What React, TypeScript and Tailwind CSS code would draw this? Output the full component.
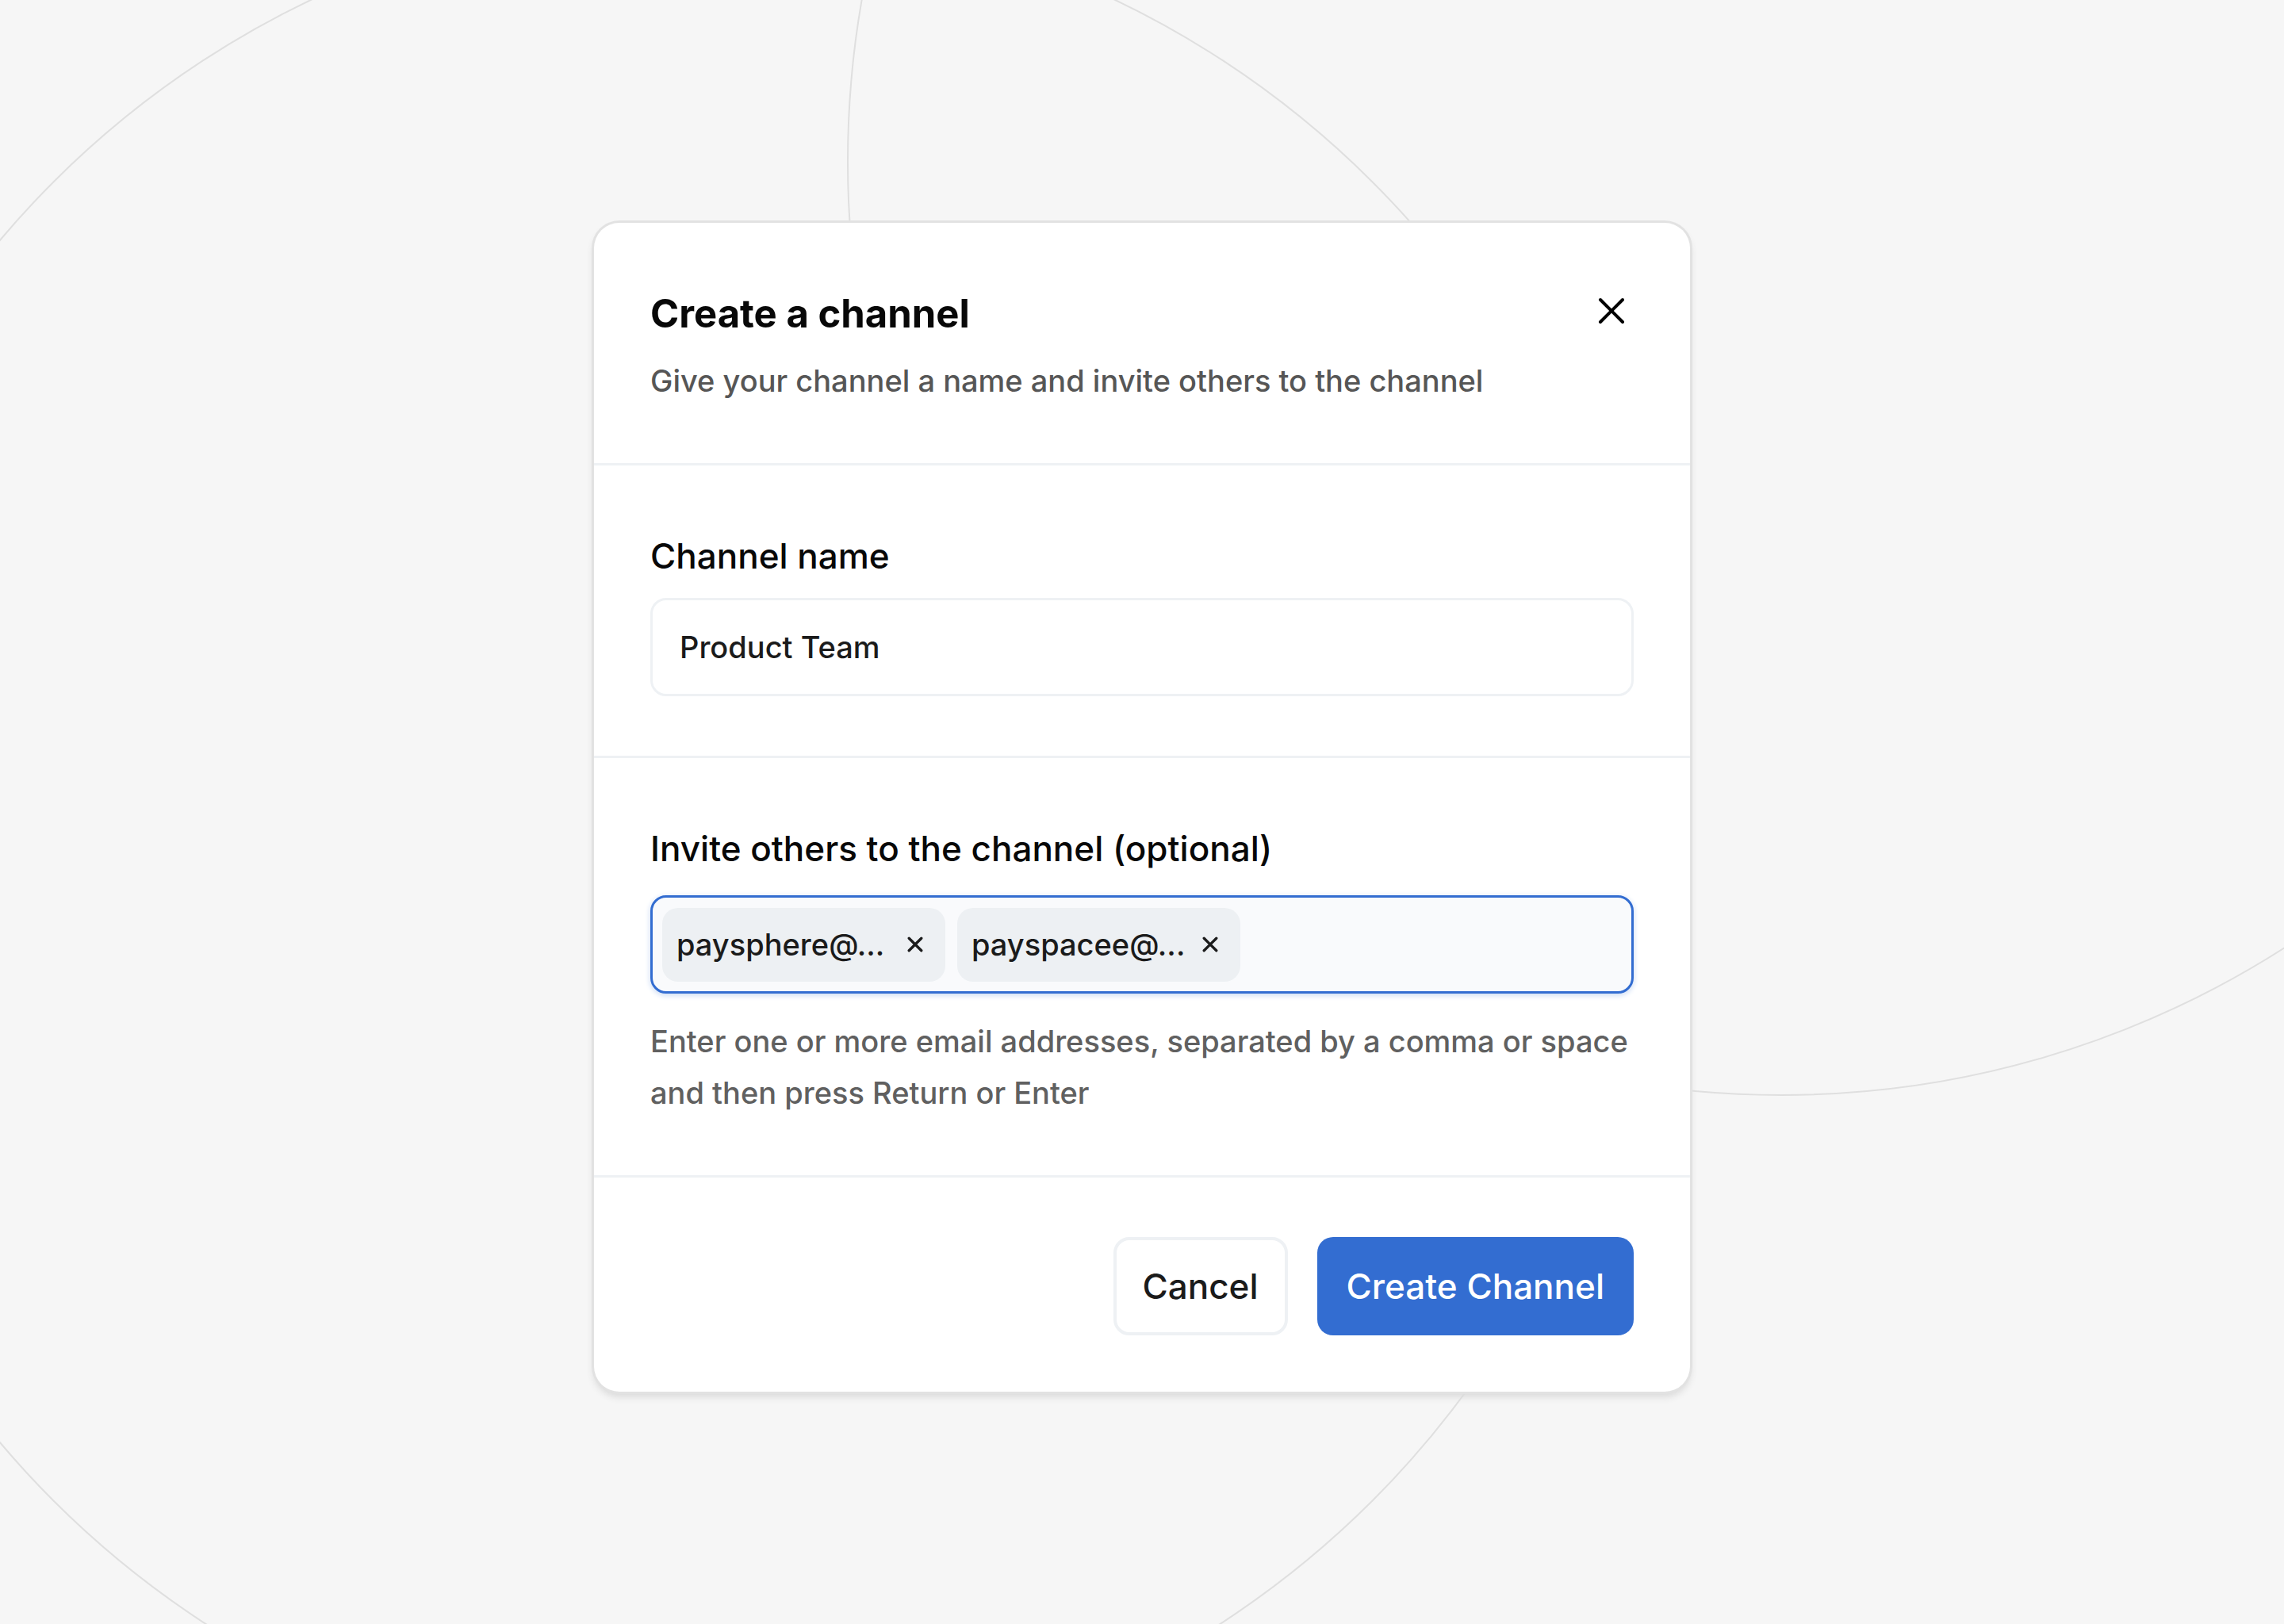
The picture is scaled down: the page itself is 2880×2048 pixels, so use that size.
import { useState, type KeyboardEvent } from "react";

type Invite = { id: number; label: string };

const INITIAL_INVITES: Invite[] = [
  { id: 1, label: "paysphere@..." },
  { id: 2, label: "payspacee@..." },
];

function CloseIcon({ className, strokeWidth }: { className: string; strokeWidth: number }) {
  return (
    <svg viewBox="0 0 36 36" fill="none" stroke="currentColor" strokeWidth={strokeWidth} strokeLinecap="round" className={className} aria-hidden="true">
      <path d="M4 4 32 32M32 4 4 32" />
    </svg>
  );
}

function BackgroundCircles() {
  return (
    <svg
      viewBox="0 0 2880 2048"
      preserveAspectRatio="xMidYMid slice"
      fill="none"
      stroke="#dfdfdf"
      strokeWidth={2}
      className="pointer-events-none absolute inset-0 h-full w-full"
      aria-hidden="true"
    >
      <circle cx="899" cy="1061" r="1176" />
      <circle cx="2246" cy="204" r="1177" />
    </svg>
  );
}

function InviteChip({ invite, onRemove }: { invite: Invite; onRemove: (id: number) => void }) {
  return (
    <span className="flex h-[93px] w-[357px] shrink-0 items-center justify-between rounded-[20px] bg-[#edf0f3] pr-7 pl-[18px] text-[38px] font-[450] text-[#1b1b1b]">
      {invite.label}
      <button type="button" aria-label={`Remove ${invite.label}`} onClick={() => onRemove(invite.id)} className="cursor-pointer">
        <CloseIcon className="size-5" strokeWidth={6} />
      </button>
    </span>
  );
}

export default function App() {
  const [name, setName] = useState("Product Team");
  const [invites, setInvites] = useState(INITIAL_INVITES);
  const [draft, setDraft] = useState("");

  function removeInvite(id: number) {
    setInvites((list) => list.filter((i) => i.id !== id));
  }

  function handleKeyDown(e: KeyboardEvent<HTMLInputElement>) {
    if (![",", " ", "Enter"].includes(e.key)) return;
    e.preventDefault();
    const email = draft.trim();
    if (!email) return;
    setInvites((list) => [...list, { id: Date.now(), label: `${email.split("@")[0]}@...` }]);
    setDraft("");
  }

  return (
    <main className="relative flex min-h-screen items-center justify-center overflow-hidden bg-[#f6f6f6] pb-3 font-['Inter','Liberation_Sans',sans-serif]">
      <BackgroundCircles />

      <form
        role="dialog"
        aria-labelledby="dialog-title"
        onSubmit={(e) => e.preventDefault()}
        className="relative w-full max-w-[1382px] rounded-[32px] bg-white shadow-[0_0_0_3px_#e2e2e2,0_6px_8px_1px_#dbdbdb]"
      >
        {/* Header */}
        <header className="flex items-start justify-between border-b-[3px] border-[#eef1f4] px-[71px] pt-[82px] pb-[71px]">
          <div>
            <h1 id="dialog-title" className="text-[49px] leading-[65px] font-bold text-[#080808]">
              Create a channel
            </h1>
            <p className="mt-5 text-[38px] leading-[65px] font-[450] text-[#565656]">Give your channel a name and invite others to the channel</p>
          </div>
          <button type="button" aria-label="Close" className="mt-[11px] mr-[10px] cursor-pointer text-black">
            <CloseIcon className="size-9" strokeWidth={4} />
          </button>
        </header>

        {/* Channel name */}
        <section className="border-b-[3px] border-[#eef1f4] px-[71px] pt-[82px] pb-[75px]">
          <label htmlFor="channel-name" className="block text-[44px] leading-[65px] font-medium text-[#080808]">
            Channel name
          </label>
          <input
            id="channel-name"
            value={name}
            onChange={(e) => setName(e.target.value)}
            className="mt-5 h-[124px] w-full rounded-[20px] border-[3px] border-[#eef1f4] bg-white px-[34px] text-[38px] font-[450] text-[#1b1b1b] outline-none"
          />
        </section>

        {/* Invites */}
        <section className="border-b-[3px] border-[#eef1f4] px-[71px] pt-[82px] pb-[71px]">
          <label htmlFor="invite-emails" className="block text-[44px] leading-[65px] font-medium text-[#080808]">
            Invite others to the channel (optional)
          </label>
          <div className="mt-[26px] flex h-[124px] items-center gap-[15px] rounded-[20px] border-[3px] border-[#336dd1] bg-[#f9fafc] px-3 shadow-[0_2px_6px_1px_#d3e0f5]">
            {invites.map((invite) => (
              <InviteChip key={invite.id} invite={invite} onRemove={removeInvite} />
            ))}
            <input
              id="invite-emails"
              aria-describedby="invite-help"
              value={draft}
              onChange={(e) => setDraft(e.target.value)}
              onKeyDown={handleKeyDown}
              className="h-full min-w-0 flex-1 bg-transparent text-[38px] font-[450] text-[#1b1b1b] outline-none"
            />
          </div>
          <p id="invite-help" className="mt-7 text-[38px] leading-[65px] font-[450] text-[#606060]">
            Enter one or more email addresses, separated by a comma or space and then press Return or Enter
          </p>
        </section>

        {/* Actions */}
        <footer className="flex justify-end gap-[37px] px-[71px] pt-[75px] pb-[71px]">
          <button type="button" className="h-[124px] cursor-pointer rounded-[20px] border-4 border-[#eef1f4] bg-white px-[33px] text-[44px] font-medium text-[#1b1b1b]">
            Cancel
          </button>
          <button type="submit" className="h-[124px] cursor-pointer rounded-[20px] bg-[#336dd1] px-[37px] text-[44px] font-medium text-white">
            Create Channel
          </button>
        </footer>
      </form>
    </main>
  );
}
